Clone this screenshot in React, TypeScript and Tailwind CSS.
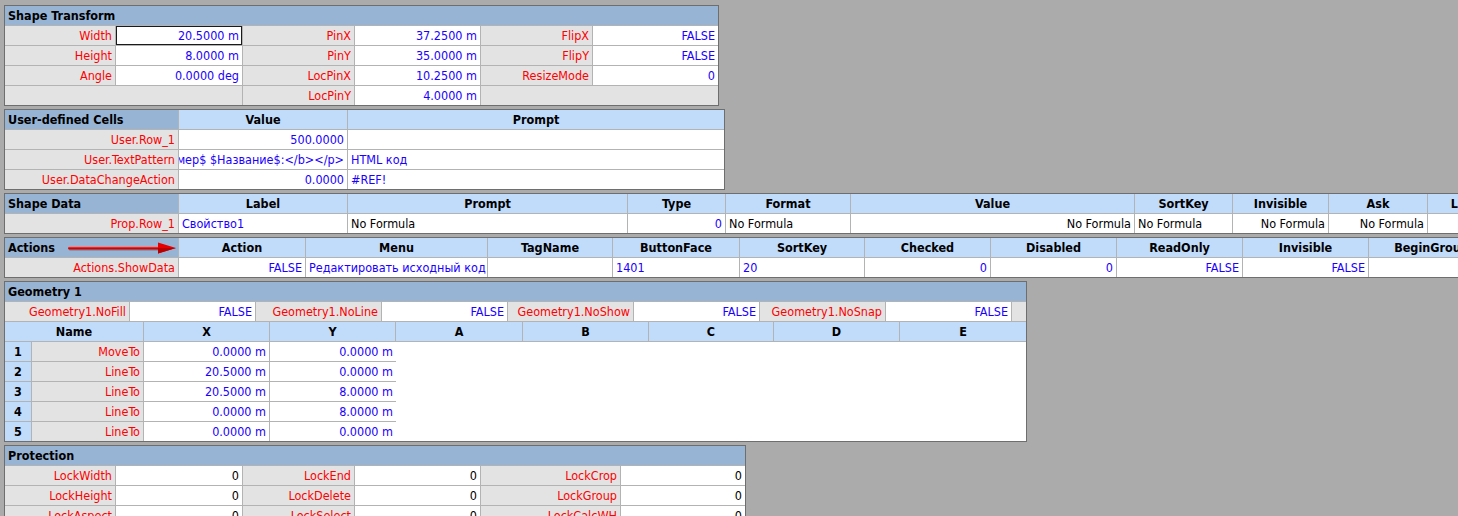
import React from 'react';

type Kind = 'lab' | 'val' | 'valL' | 'blk' | 'blkL' | 'hd' | 'sec' | 'gray' | 'white' | 'num';

type CellDef = {
  t?: string;
  w?: string;
  k: Kind;
  sel?: boolean;
};

const kindCls: Record<Kind, string> = {
  lab: 'bg-[#e3e3e3] text-[#ff0000] justify-end pr-[3px]',
  val: 'bg-white text-[#1a00ff] justify-end pr-[3px]',
  valL: 'bg-white text-[#1a00ff] justify-start pl-[3px]',
  blk: 'bg-white text-black justify-end pr-[3px]',
  blkL: 'bg-white text-black justify-start pl-[3px]',
  hd: 'bg-[#c1dbfb] text-black font-bold justify-center',
  sec: 'bg-[#98b4d4] text-black font-bold justify-start pl-[3px]',
  gray: 'bg-[#e3e3e3]',
  white: 'bg-white',
  num: 'bg-[#c1dbfb] text-black font-bold justify-start pl-[9px]',
};

function Cell({ c }: { c: CellDef }) {
  return (
    <div
      className={[
        'h-full pt-[2px] flex items-center overflow-hidden whitespace-nowrap border-r border-[#b3b3b3] last:border-r-0',
        c.w ? `${c.w} shrink-0` : 'flex-1',
        kindCls[c.k],
        c.sel ? 'relative' : '',
      ].join(' ')}
    >
      {c.sel && (
        <div className="absolute -left-px -top-px -right-px -bottom-px border-2 border-[#1a1a1a] pointer-events-none" />
      )}
      <span className="shrink-0">{c.t}</span>
    </div>
  );
}

function Row({ cells, children }: { cells?: CellDef[]; children?: React.ReactNode }) {
  return (
    <div className="flex h-[20px] border-b border-[#b3b3b3] last:border-b-0 last:h-[19px] relative">
      {cells?.map((c, i) => <Cell key={i} c={c} />)}
      {children}
    </div>
  );
}

function Section({ w, children }: { w?: string; children: React.ReactNode }) {
  return (
    <div className={`${w ?? 'w-max'} shrink-0 border border-[#6e6e6e] flex flex-col bg-white`}>
      {children}
    </div>
  );
}

// Shape Transform
const transformRows: CellDef[][] = [
  [
    { t: 'Width', w: 'w-[111px]', k: 'lab' },
    { t: '20.5000 m', w: 'w-[127px]', k: 'val', sel: true },
    { t: 'PinX', w: 'w-[112px]', k: 'lab' },
    { t: '37.2500 m', w: 'w-[126px]', k: 'val' },
    { t: 'FlipX', w: 'w-[112px]', k: 'lab' },
    { t: 'FALSE', w: 'w-[125px]', k: 'val' },
  ],
  [
    { t: 'Height', w: 'w-[111px]', k: 'lab' },
    { t: '8.0000 m', w: 'w-[127px]', k: 'val' },
    { t: 'PinY', w: 'w-[112px]', k: 'lab' },
    { t: '35.0000 m', w: 'w-[126px]', k: 'val' },
    { t: 'FlipY', w: 'w-[112px]', k: 'lab' },
    { t: 'FALSE', w: 'w-[125px]', k: 'val' },
  ],
  [
    { t: 'Angle', w: 'w-[111px]', k: 'lab' },
    { t: '0.0000 deg', w: 'w-[127px]', k: 'val' },
    { t: 'LocPinX', w: 'w-[112px]', k: 'lab' },
    { t: '10.2500 m', w: 'w-[126px]', k: 'val' },
    { t: 'ResizeMode', w: 'w-[112px]', k: 'lab' },
    { t: '0', w: 'w-[125px]', k: 'val' },
  ],
  [
    { w: 'w-[238px]', k: 'gray' },
    { t: 'LocPinY', w: 'w-[112px]', k: 'lab' },
    { t: '4.0000 m', w: 'w-[126px]', k: 'val' },
    { w: 'w-[237px]', k: 'gray' },
  ],
];

const userRows: CellDef[][] = [
  [
    { t: 'User-defined Cells', w: 'w-[174px]', k: 'sec' },
    { t: 'Value', w: 'w-[169px]', k: 'hd' },
    { t: 'Prompt', w: 'w-[376px]', k: 'hd' },
  ],
  [
    { t: 'User.Row_1', w: 'w-[174px]', k: 'lab' },
    { t: '500.0000', w: 'w-[169px]', k: 'val' },
    { t: '', w: 'w-[376px]', k: 'valL' },
  ],
  [
    { t: 'User.TextPattern', w: 'w-[174px]', k: 'lab' },
    { t: 'мер$ $Название$:</b></p>', w: 'w-[169px]', k: 'val' },
    { t: 'HTML код', w: 'w-[376px]', k: 'valL' },
  ],
  [
    { t: 'User.DataChangeAction', w: 'w-[174px]', k: 'lab' },
    { t: '0.0000', w: 'w-[169px]', k: 'val' },
    { t: '#REF!', w: 'w-[376px]', k: 'valL' },
  ],
];

const propRows: CellDef[][] = [
  [
    { t: 'Shape Data', w: 'w-[174px]', k: 'sec' },
    { t: 'Label', w: 'w-[169px]', k: 'hd' },
    { t: 'Prompt', w: 'w-[280px]', k: 'hd' },
    { t: 'Type', w: 'w-[98px]', k: 'hd' },
    { t: 'Format', w: 'w-[125px]', k: 'hd' },
    { t: 'Value', w: 'w-[284px]', k: 'hd' },
    { t: 'SortKey', w: 'w-[98px]', k: 'hd' },
    { t: 'Invisible', w: 'w-[96px]', k: 'hd' },
    { t: 'Ask', w: 'w-[99px]', k: 'hd' },
    { t: 'LangID', w: 'w-[90px]', k: 'hd' },
  ],
  [
    { t: 'Prop.Row_1', w: 'w-[174px]', k: 'lab' },
    { t: 'Свойство1', w: 'w-[169px]', k: 'valL' },
    { t: 'No Formula', w: 'w-[280px]', k: 'blkL' },
    { t: '0', w: 'w-[98px]', k: 'val' },
    { t: 'No Formula', w: 'w-[125px]', k: 'blkL' },
    { t: 'No Formula', w: 'w-[284px]', k: 'blk' },
    { t: 'No Formula', w: 'w-[98px]', k: 'blkL' },
    { t: 'No Formula', w: 'w-[96px]', k: 'blk' },
    { t: 'No Formula', w: 'w-[99px]', k: 'blk' },
    { t: '1049', w: 'w-[90px]', k: 'val' },
  ],
];

const actionRows: CellDef[][] = [
  [
    { t: 'Actions', w: 'w-[174px]', k: 'sec' },
    { t: 'Action', w: 'w-[127px]', k: 'hd' },
    { t: 'Menu', w: 'w-[182px]', k: 'hd' },
    { t: 'TagName', w: 'w-[125px]', k: 'hd' },
    { t: 'ButtonFace', w: 'w-[127px]', k: 'hd' },
    { t: 'SortKey', w: 'w-[125px]', k: 'hd' },
    { t: 'Checked', w: 'w-[126px]', k: 'hd' },
    { t: 'Disabled', w: 'w-[126px]', k: 'hd' },
    { t: 'ReadOnly', w: 'w-[126px]', k: 'hd' },
    { t: 'Invisible', w: 'w-[126px]', k: 'hd' },
    { t: 'BeginGroup', w: 'w-[126px]', k: 'hd' },
  ],
  [
    { t: 'Actions.ShowData', w: 'w-[174px]', k: 'lab' },
    { t: 'FALSE', w: 'w-[127px]', k: 'val' },
    { t: 'Редактировать исходный код', w: 'w-[182px]', k: 'valL' },
    { t: '', w: 'w-[125px]', k: 'valL' },
    { t: '1401', w: 'w-[127px]', k: 'valL' },
    { t: '20', w: 'w-[125px]', k: 'valL' },
    { t: '0', w: 'w-[126px]', k: 'val' },
    { t: '0', w: 'w-[126px]', k: 'val' },
    { t: 'FALSE', w: 'w-[126px]', k: 'val' },
    { t: 'FALSE', w: 'w-[126px]', k: 'val' },
    { t: 'FALSE', w: 'w-[126px]', k: 'val' },
  ],
];

const geoFlags: CellDef[] = [
  { t: 'Geometry1.NoFill', w: 'w-[125px]', k: 'lab' },
  { t: 'FALSE', w: 'w-[126px]', k: 'val' },
  { t: 'Geometry1.NoLine', w: 'w-[126px]', k: 'lab' },
  { t: 'FALSE', w: 'w-[126px]', k: 'val' },
  { t: 'Geometry1.NoShow', w: 'w-[126px]', k: 'lab' },
  { t: 'FALSE', w: 'w-[126px]', k: 'val' },
  { t: 'Geometry1.NoSnap', w: 'w-[126px]', k: 'lab' },
  { t: 'FALSE', w: 'w-[126px]', k: 'val' },
  { k: 'gray' },
];

const geoHead: CellDef[] = [
  { t: 'Name', w: 'w-[139px]', k: 'hd' },
  { t: 'X', w: 'w-[126px]', k: 'hd' },
  { t: 'Y', w: 'w-[126px]', k: 'hd' },
  { t: 'A', w: 'w-[127px]', k: 'hd' },
  { t: 'B', w: 'w-[126px]', k: 'hd' },
  { t: 'C', w: 'w-[125px]', k: 'hd' },
  { t: 'D', w: 'w-[126px]', k: 'hd' },
  { t: 'E', k: 'hd' },
];

const geoData: [string, string, string][] = [
  ['MoveTo', '0.0000 m', '0.0000 m'],
  ['LineTo', '20.5000 m', '0.0000 m'],
  ['LineTo', '20.5000 m', '8.0000 m'],
  ['LineTo', '0.0000 m', '8.0000 m'],
  ['LineTo', '0.0000 m', '0.0000 m'],
];

const protRows: [string, string, string][] = [
  ['LockWidth', 'LockEnd', 'LockCrop'],
  ['LockHeight', 'LockDelete', 'LockGroup'],
  ['LockAspect', 'LockSelect', 'LockCalcWH'],
];

// red pointer arrow drawn over the Actions header
function Arrow() {
  return (
    <svg
      className="absolute left-[63px] top-[3px] pointer-events-none"
      width="112"
      height="14"
      viewBox="0 0 112 14"
    >
      <defs>
        <linearGradient id="arrGrad" x1="0" y1="0" x2="0" y2="1">
          <stop offset="0" stopColor="#ff7070" />
          <stop offset="0.5" stopColor="#ec0000" />
          <stop offset="1" stopColor="#a80000" />
        </linearGradient>
      </defs>
      <rect x="1" y="7" width="95" height="3" rx="1.5" fill="#5a3a3a" fillOpacity="0.25" />
      <rect x="0" y="5.5" width="95" height="3" rx="1.5" fill="url(#arrGrad)" />
      <path d="M90 1.5 L108 7 L90 12.5 Z" fill="#e80000" />
      <path d="M90 7 L108 7 L90 12.5 Z" fill="#b80000" />
    </svg>
  );
}

export default function App() {
  return (
    <div
      className="w-[1458px] h-[516px] overflow-hidden bg-[#ababab] pt-[5px] pl-[4px] flex flex-col gap-[3px] text-[12.5px] leading-none"
      style={{ fontFamily: '"DejaVu Sans Condensed", "Liberation Sans", Arial, sans-serif' }}
    >
      <Section w="w-[715px]">
        <Row cells={[{ t: 'Shape Transform', k: 'sec' }]} />
        {transformRows.map((r, i) => <Row key={i} cells={r} />)}
      </Section>

      <Section w="w-[721px]">
        {userRows.map((r, i) => <Row key={i} cells={r} />)}
      </Section>

      <Section>
        {propRows.map((r, i) => <Row key={i} cells={r} />)}
      </Section>

      <Section>
        <Row cells={actionRows[0]}>
          <Arrow />
        </Row>
        <Row cells={actionRows[1]} />
      </Section>

      <Section w="w-[1023px]">
        <Row cells={[{ t: 'Geometry 1', k: 'sec' }]} />
        <Row cells={geoFlags} />
        <Row cells={geoHead} />
        <div className="flex">
          <div className="w-[391px] shrink-0 flex flex-col border-r border-[#b3b3b3]">
            {geoData.map(([n, x, y], i) => (
              <Row
                key={i}
                cells={[
                  { t: String(i + 1), w: 'w-[27px]', k: 'num' },
                  { t: n, w: 'w-[112px]', k: 'lab' },
                  { t: x, w: 'w-[126px]', k: 'val' },
                  { t: y, w: 'w-[126px]', k: 'val' },
                ]}
              />
            ))}
          </div>
          <div className="flex-1 bg-white" />
        </div>
      </Section>

      <Section w="w-[742px]">
        <Row cells={[{ t: 'Protection', k: 'sec' }]} />
        {protRows.map(([a, b, c], i) => (
          <Row
            key={i}
            cells={[
              { t: a, w: 'w-[111px]', k: 'lab' },
              { t: '0', w: 'w-[127px]', k: 'blk' },
              { t: b, w: 'w-[112px]', k: 'lab' },
              { t: '0', w: 'w-[126px]', k: 'blk' },
              { t: c, w: 'w-[140px]', k: 'lab' },
              { t: '0', w: 'w-[124px]', k: 'blk' },
            ]}
          />
        ))}
      </Section>
    </div>
  );
}
